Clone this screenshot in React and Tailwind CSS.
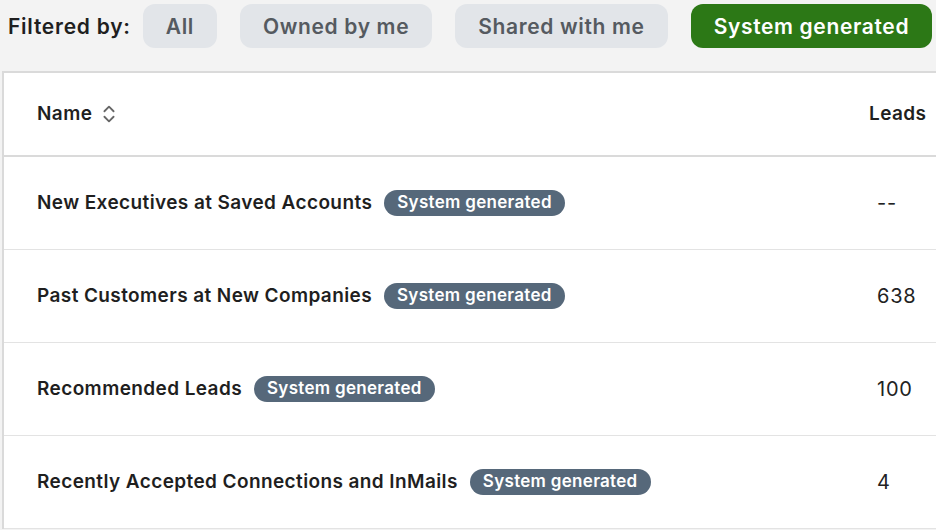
import { ChevronsUpDown } from "lucide-react";

const filters = [
  { label: "All", active: false },
  { label: "Owned by me", active: false },
  { label: "Shared with me", active: false },
  { label: "System generated", active: true },
];

const lists = [
  { name: "New Executives at Saved Accounts", leads: "--" },
  { name: "Past Customers at New Companies", leads: "638" },
  { name: "Recommended Leads", leads: "100" },
  { name: "Recently Accepted Connections and InMails", leads: "4" },
];

export default function App() {
  return (
    <div
      className="w-[936px] h-[530px] bg-[#f3f3f3] overflow-hidden text-[#1f1f1f]"
      style={{ fontFamily: "Inter, 'Noto Sans', sans-serif" }}
    >
      {/* Filtros */}
      <div className="h-[71px] flex items-start pt-[4px] pl-[8px]">
        <span className="h-[44px] pt-[2px] flex items-center text-[21px] font-semibold mr-[12px] tracking-[0.75px]">
          Filtered by:
        </span>
        <div className="flex gap-[23px]">
          {filters.map((f) => (
            <button
              key={f.label}
              className={`h-[44px] pt-[2px] px-[23px] rounded-[12px] text-[21px] font-semibold tracking-[0.65px] whitespace-nowrap ${
                f.active ? "bg-[#2c7816] text-white" : "bg-[#e2e5e9] text-[#555a60]"
              }`}
            >
              {f.label}
            </button>
          ))}
        </div>
      </div>

      {/* Tabla */}
      <div className="ml-[2px] w-[940px] bg-white border-l-2 border-t-2 border-[#dadada]">
        <div className="h-[84px] flex items-center border-b-2 border-[#dadada]">
          <div className="flex-1 pl-[33px] flex items-center gap-[6px] text-[19px] font-semibold tracking-[0.4px]">
            Name
            <ChevronsUpDown size={22} strokeWidth={2} className="text-[#666]" />
          </div>
          <div className="w-[73px] text-[19px] font-semibold tracking-[0.4px]">Leads</div>
        </div>
        {lists.map((l) => (
          <div key={l.name} className="h-[93px] flex items-center border-b border-[#e3e3e3]">
            <div className="flex-1 pl-[33px] flex items-center gap-[12px]">
              <span className="text-[19px] font-semibold tracking-[0.4px]">{l.name}</span>
              <span className="h-[26px] px-[13px] rounded-full bg-[#56687a] text-white text-[17px] font-semibold tracking-[0.3px] flex items-center">
                System generated
              </span>
            </div>
            <div className="w-[73px] pl-[8px] text-[20px] tracking-[0.8px] text-[#222]">{l.leads}</div>
          </div>
        ))}
      </div>
    </div>
  );
}
